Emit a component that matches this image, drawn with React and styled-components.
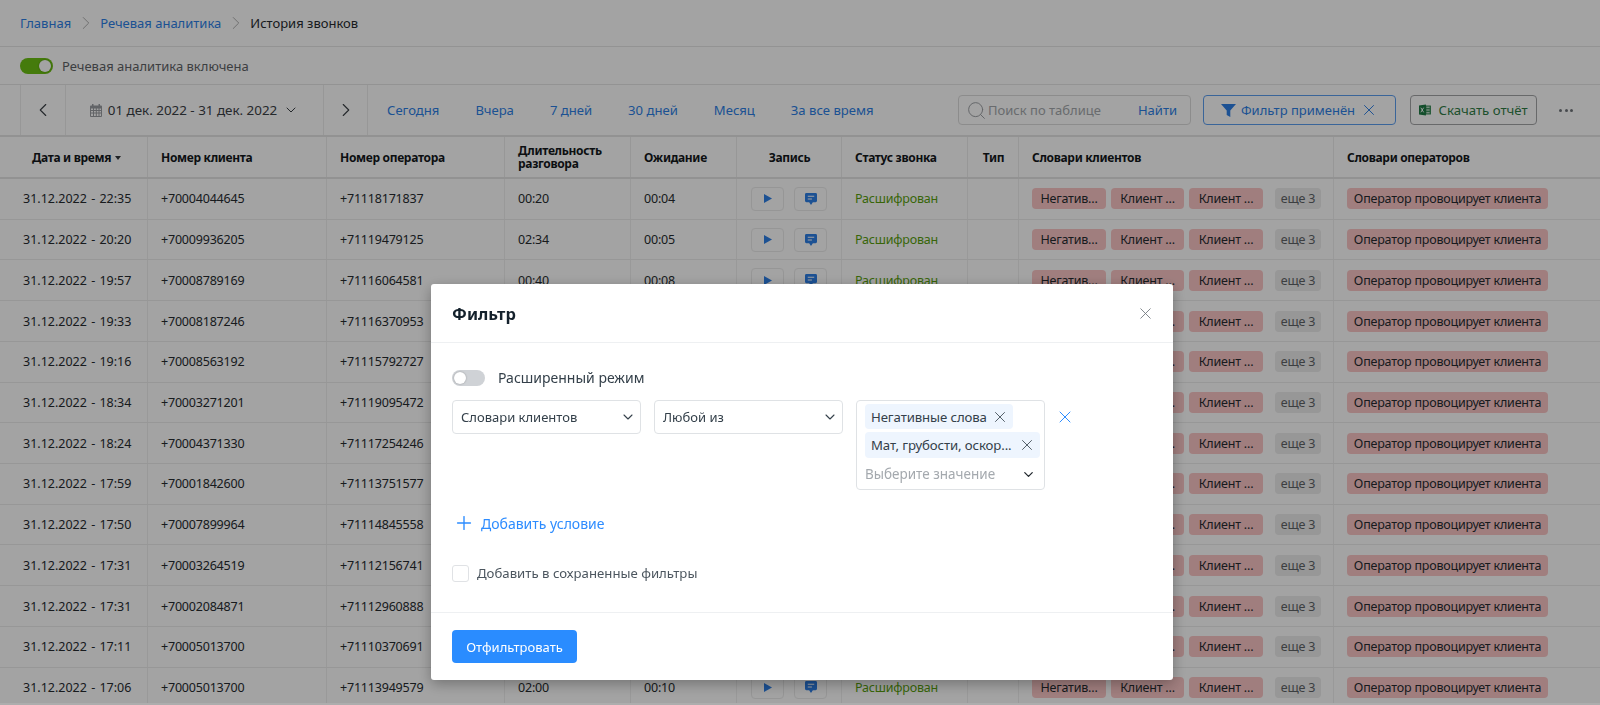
import React from 'react';
import styled, { createGlobalStyle } from 'styled-components';
import { ChevronLeft, ChevronRight, ChevronDown, Search, X, Plus } from 'lucide-react';

const GlobalStyle = createGlobalStyle`
  html, body { margin: 0; padding: 0; height: 705px; overflow: hidden; background: #fff; }
  body { font-family: "Noto Sans", "Liberation Sans", sans-serif; font-size: 13px; color: #262b30; }
  * { box-sizing: border-box; }
`;

const COLUMNS = '148px 179px 178px 126px 106px 105px 126px 51px 315px 1fr';

const Page = styled.div`
  height: 705px;
  overflow: hidden;
  display: flex;
  flex-direction: column;
`;

const Breadcrumbs = styled.nav`
  height: 47px;
  padding: 0 20px 1px;
  display: flex;
  align-items: center;
  gap: 3.5px;
  border-bottom: 1px solid #e6e6e6;
  font-size: 13px;
  color: #a8a8a8;
`;

const Crumb = styled.a`
  color: ${(p) => (p.$current ? '#262b30' : '#2d7fe6')};
`;

const AnalyticsRow = styled.div`
  height: 38px;
  padding: 0 20px;
  display: flex;
  align-items: center;
  gap: 9px;
  border-bottom: 1px solid #e6e6e6;
  color: #5f6367;
  font-size: 13px;
`;

const Toggle = styled.span`
  position: relative;
  flex: none;
  width: 33px;
  height: 16px;
  border-radius: 8px;
  background: ${(p) => (p.$on ? '#6cc013' : '#cfd2d6')};
  &::after {
    content: '';
    position: absolute;
    top: 2px;
    left: ${(p) => (p.$on ? '19px' : '2px')};
    width: 12px;
    height: 12px;
    border-radius: 50%;
    background: #fff;
    box-shadow: 0 0 2px rgba(0, 0, 0, 0.3);
  }
`;

const Toolbar = styled.div`
  height: 52px;
  padding: 0 27px 0 20px;
  display: flex;
  align-items: center;
  border-bottom: 2px solid #e4e4e4;
`;

const NavCell = styled.div`
  flex: none;
  height: 100%;
  width: ${(p) => p.$w}px;
  display: flex;
  align-items: center;
  justify-content: center;
  gap: 6px;
  border-left: 1px solid #ececec;
  border-right: ${(p) => (p.$last ? '1px solid #ececec' : 'none')};
  color: #3b4046;
  font-size: 13.4px;
  white-space: nowrap;
`;

const Presets = styled.div`
  margin-left: 19px;
  display: flex;
  gap: 36px;
  color: #2d7fe6;
  font-size: 13.1px;
  white-space: nowrap;
`;

const SearchBox = styled.div`
  margin-left: auto;
  flex: none;
  width: 233px;
  height: 30px;
  padding: 0 13px 0 7px;
  display: flex;
  align-items: center;
  gap: 1px;
  border: 1px solid #dcdcdc;
  border-radius: 4px;
  color: #a4a8ac;
  font-size: 13px;
  span:last-child { margin-left: auto; color: #2d7fe6; }
`;

const FilterButton = styled.div`
  flex: none;
  margin-left: 12px;
  width: 193px;
  height: 30px;
  display: flex;
  align-items: center;
  justify-content: center;
  gap: 5px;
  border: 1px solid #5c9ff0;
  border-radius: 4px;
  color: #2d7fe6;
  font-size: 13px;
`;

const DownloadButton = styled.div`
  flex: none;
  margin-left: 14px;
  width: 127px;
  height: 30px;
  display: flex;
  align-items: center;
  justify-content: center;
  gap: 7px;
  border: 1px solid #a3a5a7;
  border-radius: 4px;
  color: #2f7d46;
  font-size: 13.2px;
`;

const Dots = styled.div`
  flex: none;
  margin-left: 22px;
  width: 14px;
  display: flex;
  justify-content: space-between;
  i { width: 3px; height: 3px; border-radius: 50%; background: #70757a; }
`;

const Table = styled.div`
  height: 566px;
  overflow: hidden;
`;

const HeadRow = styled.div`
  display: grid;
  grid-template-columns: ${COLUMNS};
  height: 42px;
  border-bottom: 2px solid #e4e4e4;
`;

const HeadCell = styled.div`
  padding: 0 0 0 ${(p) => p.$pad || 13}px;
  display: flex;
  align-items: center;
  justify-content: ${(p) => (p.$center ? 'center' : 'flex-start')};
  border-right: ${(p) => (p.$last ? 'none' : '1px solid #ececec')};
  font-size: 12px;
  font-weight: 700;
  letter-spacing: -0.32px;
  line-height: 13px;
  color: #14181c;
`;

const SortMark = styled.span`
  margin: 2px 0 0 4px;
  border: 3px solid transparent;
  border-top: 4px solid #33373b;
  border-bottom: none;
`;

const Row = styled.div`
  display: grid;
  grid-template-columns: ${COLUMNS};
  height: 40.73px;
  border-bottom: 1px solid #ececec;
`;

const Cell = styled.div`
  padding: 0 0 0 ${(p) => p.$pad ?? 13}px;
  display: flex;
  align-items: center;
  justify-content: ${(p) => (p.$center ? 'center' : 'flex-start')};
  gap: ${(p) => p.$gap || 0}px;
  border-right: ${(p) => (p.$last ? 'none' : '1px solid #f0f0f0')};
  font-size: 12.5px;
  letter-spacing: -0.2px;
  color: #262b30;
  white-space: nowrap;
`;

const DateCell = styled(Cell)`
  letter-spacing: 0;
  word-spacing: 1px;
`;

const IconButton = styled.div`
  width: 33px;
  height: 24px;
  display: flex;
  align-items: center;
  justify-content: center;
  border: 1px solid #ebebeb;
  border-radius: 4px;
`;

const Status = styled.span`
  color: #589f0e;
`;

const Tag = styled.span`
  width: ${(p) => p.$w}px;
  flex: none;
  height: 21px;
  display: flex;
  align-items: center;
  justify-content: center;
  border-radius: 4px;
  background: ${(p) => (p.$more ? '#ececec' : '#fbc6c6')};
  margin-left: ${(p) => (p.$more ? '7px' : 0)};
  color: ${(p) => (p.$more ? '#5f6367' : '#262b30')};
  white-space: nowrap;
`;

const Overlay = styled.div`
  position: fixed;
  inset: 0;
  background: rgba(0, 0, 0, 0.36);
  &::after {
    content: '';
    position: absolute;
    left: 0;
    right: 0;
    bottom: 0;
    height: 2px;
    background: rgba(255, 255, 255, 0.1);
  }
`;

const Modal = styled.div`
  width: 742px;
  height: 396px;
  margin: 284px 0 0 431px;
  background: #fff;
  border-radius: 3px;
  box-shadow: 0 4px 14px rgba(0, 0, 0, 0.3);
  display: flex;
  flex-direction: column;
`;

const ModalHead = styled.div`
  height: 59px;
  padding: 0 18px 0 21px;
  display: flex;
  align-items: center;
  justify-content: space-between;
  border-bottom: 1px solid #eef0f2;
  h2 { margin: 0; font-size: 16.5px; font-weight: 700; color: #14212c; }
`;

const ModalBody = styled.div`
  flex: 1;
  padding: 25px 21px 0;
`;

const ModeRow = styled.div`
  display: flex;
  align-items: center;
  gap: 13px;
  font-size: 14px;
  color: #34404a;
`;

const ConditionRow = styled.div`
  margin-top: 13px;
  display: flex;
  align-items: flex-start;
  gap: 13px;
`;

const Select = styled.div`
  width: 189px;
  height: 34px;
  padding: 0 4px 0 8px;
  display: flex;
  align-items: center;
  justify-content: space-between;
  border: 1px solid #dfe2e5;
  border-radius: 4px;
  font-size: 13px;
  color: #34404a;
`;

const MultiSelect = styled.div`
  width: 189px;
  height: 90px;
  padding: 3px 5px 0 8px;
  border: 1px solid #dfe2e5;
  border-radius: 4px;
  display: flex;
  flex-direction: column;
  align-items: flex-start;
  gap: 3px;
`;

const ValueChip = styled.div`
  height: ${(p) => p.$h || 25}px;
  width: ${(p) => p.$w}px;
  padding: 0 4px 0 6px;
  display: flex;
  align-items: center;
  justify-content: space-between;
  border-radius: 4px;
  background: #eef5fe;
  font-size: 13.2px;
  letter-spacing: -0.1px;
  color: #34404a;
  white-space: nowrap;
`;

const Placeholder = styled.div`
  margin-top: 4px;
  width: 100%;
  padding-right: 3px;
  display: flex;
  align-items: center;
  justify-content: space-between;
  font-size: 13.5px;
  color: #a4a9ae;
  svg { color: #22282e; }
`;

const ClearButton = styled.div`
  margin: 7px 0 0 -3px;
  color: #2d8cff;
  line-height: 0;
`;

const AddCondition = styled.div`
  margin: 22px 0 0 1px;
  display: flex;
  align-items: center;
  gap: 6px;
  color: #2d8cff;
  font-size: 14px;
`;

const SaveRow = styled.div`
  margin-top: 30px;
  display: flex;
  align-items: center;
  gap: 8px;
  font-size: 13.2px;
  color: #4c565f;
`;

const Checkbox = styled.span`
  width: 17px;
  height: 17px;
  border: 1px solid #e0e2e5;
  border-radius: 3px;
`;

const ModalFoot = styled.div`
  height: 68px;
  padding: 17px 21px 0;
  border-top: 1px solid #eef0f2;
`;

const PrimaryButton = styled.div`
  width: 125px;
  height: 33px;
  display: flex;
  align-items: center;
  justify-content: center;
  border-radius: 4px;
  background: #2a8cff;
  color: #fff;
  font-size: 13px;
`;

const CalendarIcon = () => (
  <svg width="12" height="13" viewBox="0 0 12 13" fill="#9a9da1">
    <path d="M2 0h1.500v1.500h5V0H10v1.500h1a1 1 0 0 1 1 1V12a1 1 0 0 1-1 1H1a1 1 0 0 1-1-1V2.500a1 1 0 0 1 1-1h1zM1 4.500V6h2V4.500zm3 0V6h1.800V4.500zm2.800 0V6H8.500V4.500zm2.700 0V6H11V4.500zM1 7v1.500h2V7zm3 0v1.500h1.800V7zm2.800 0v1.500H8.500V7zm2.700 0v1.500H11V7zM1 9.500V12h2V9.500zm3 0V12h1.800V9.500zm2.800 0V12H8.500V9.500zm2.700 0V12H11V9.500z" />
  </svg>
);

const FunnelIcon = () => (
  <svg width="15" height="13" viewBox="0 0 15 13" fill="#2d7fe6">
    <path d="M0 0h15L9.300 6.600V13L5.700 11V6.600z" />
  </svg>
);

const ExcelIcon = () => (
  <svg width="12" height="12" viewBox="0 0 13 12">
    <path d="M6 1h6.500a.5.500 0 0 1 .5.500v9a.5.500 0 0 1-.5.500H6z" fill="#3f8f5d" />
    <path d="M8 3h3.500M8 6h3.500M8 9h3.500" stroke="#fff" strokeWidth="1" />
    <path d="M0 1.200 7.500 0v12L0 10.800z" fill="#1e7a44" />
    <path d="m2 3.500 3 5M5 3.500l-3 5" stroke="#fff" strokeWidth="1" />
  </svg>
);

const PlayIcon = () => (
  <svg width="8" height="9" viewBox="0 0 9 10" fill="#2d7fe6">
    <path d="M0 0l9 5-9 5z" />
  </svg>
);

const CommentIcon = () => (
  <svg width="12" height="12" viewBox="0 0 13 13">
    <path d="M1.500 0h10A1.500 1.500 0 0 1 13 1.500v7a1.500 1.500 0 0 1-1.500 1.500H8.500L6.500 13l-2-3h-3A1.500 1.500 0 0 1 0 8.500v-7A1.500 1.500 0 0 1 1.500 0z" fill="#2d7fe6" />
    <path d="M3 3.500h7M3 6.500h4.500" stroke="#fff" strokeWidth="1.200" />
  </svg>
);

const rows = [
  ['31.12.2022 - 22:35', '+70004044645', '+71118171837', '00:20', '00:04'],
  ['31.12.2022 - 20:20', '+70009936205', '+71119479125', '02:34', '00:05'],
  ['31.12.2022 - 19:57', '+70008789169', '+71116064581', '00:40', '00:08'],
  ['31.12.2022 - 19:33', '+70008187246', '+71116370953', '01:12', '00:06'],
  ['31.12.2022 - 19:16', '+70008563192', '+71115792727', '00:52', '00:04'],
  ['31.12.2022 - 18:34', '+70003271201', '+71119095472', '01:45', '00:07'],
  ['31.12.2022 - 18:24', '+70004371330', '+71117254246', '00:33', '00:05'],
  ['31.12.2022 - 17:59', '+70001842600', '+71113751577', '02:10', '00:09'],
  ['31.12.2022 - 17:50', '+70007899964', '+71114845558', '01:03', '00:04'],
  ['31.12.2022 - 17:31', '+70003264519', '+71112156741', '00:47', '00:06'],
  ['31.12.2022 - 17:31', '+70002084871', '+71112960888', '01:28', '00:08'],
  ['31.12.2022 - 17:11', '+70005013700', '+71110370691', '00:15', '00:05'],
  ['31.12.2022 - 17:06', '+70005013700', '+71113949579', '02:00', '00:10'],
];

const presets = ['Сегодня', 'Вчера', '7 дней', '30 дней', 'Месяц', 'За все время'];

export default function App() {
  return (
    <>
      <GlobalStyle />
      <Page>
        <Breadcrumbs>
          <Crumb>Главная</Crumb>
          <ChevronRight size={22} strokeWidth={1} />
          <Crumb>Речевая аналитика</Crumb>
          <ChevronRight size={22} strokeWidth={1} />
          <Crumb $current>История звонков</Crumb>
        </Breadcrumbs>
        <AnalyticsRow>
          <Toggle $on />
          Речевая аналитика включена
        </AnalyticsRow>
        <Toolbar>
          <NavCell $w={45}><ChevronLeft size={22} strokeWidth={1.2} /></NavCell>
          <NavCell $w={258}>
            <CalendarIcon />
            01 дек. 2022 - 31 дек. 2022
            <ChevronDown size={16} strokeWidth={1.5} />
          </NavCell>
          <NavCell $w={45} $last><ChevronRight size={22} strokeWidth={1.2} /></NavCell>
          <Presets>
            {presets.map((p) => <span key={p}>{p}</span>)}
          </Presets>
          <SearchBox>
            <Search size={21} strokeWidth={1.1} color="#9a9da1" />
            <span>Поиск по таблице</span>
            <span>Найти</span>
          </SearchBox>
          <FilterButton>
            <FunnelIcon />
            Фильтр применён
            <X size={18} strokeWidth={1.3} />
          </FilterButton>
          <DownloadButton>
            <ExcelIcon />
            Скачать отчёт
          </DownloadButton>
          <Dots><i /><i /><i /></Dots>
        </Toolbar>
        <Table>
          <HeadRow>
            <HeadCell $pad={32}>Дата и время<SortMark /></HeadCell>
            <HeadCell>Номер клиента</HeadCell>
            <HeadCell>Номер оператора</HeadCell>
            <HeadCell>Длительность разговора</HeadCell>
            <HeadCell>Ожидание</HeadCell>
            <HeadCell $center $pad={1}>Запись</HeadCell>
            <HeadCell>Статус звонка</HeadCell>
            <HeadCell $center $pad={1}>Тип</HeadCell>
            <HeadCell>Словари клиентов</HeadCell>
            <HeadCell $last>Словари операторов</HeadCell>
          </HeadRow>
          {rows.map((r, i) => (
            <Row key={i}>
              <DateCell $pad={23}>{r[0]}</DateCell>
              <Cell>{r[1]}</Cell>
              <Cell>{r[2]}</Cell>
              <Cell>{r[3]}</Cell>
              <Cell>{r[4]}</Cell>
              <Cell $center $pad={0} $gap={10}>
                <IconButton><PlayIcon /></IconButton>
                <IconButton><CommentIcon /></IconButton>
              </Cell>
              <Cell><Status>Расшифрован</Status></Cell>
              <Cell />
              <Cell $gap={5}>
                <Tag $w={74}>Негатив...</Tag>
                <Tag $w={73}>Клиент ...</Tag>
                <Tag $w={74}>Клиент ...</Tag>
                <Tag $w={46} $more>еще 3</Tag>
              </Cell>
              <Cell $last><Tag $w={201}>Оператор провоцирует клиента</Tag></Cell>
            </Row>
          ))}
        </Table>
      </Page>
      <Overlay>
        <Modal>
          <ModalHead>
            <h2>Фильтр</h2>
            <X size={19} strokeWidth={1.1} color="#70777d" />
          </ModalHead>
          <ModalBody>
            <ModeRow>
              <Toggle />
              Расширенный режим
            </ModeRow>
            <ConditionRow>
              <Select>
                Словари клиентов
                <ChevronDown size={16} strokeWidth={1.6} />
              </Select>
              <Select>
                Любой из
                <ChevronDown size={16} strokeWidth={1.6} />
              </Select>
              <MultiSelect>
                <ValueChip $w={148}>
                  Негативные слова
                  <X size={18} strokeWidth={1.1} />
                </ValueChip>
                <ValueChip $w={175} $h={26}>
                  Мат, грубости, оскор...
                  <X size={18} strokeWidth={1.1} />
                </ValueChip>
                <Placeholder>
                  Выберите значение
                  <ChevronDown size={15} strokeWidth={2} />
                </Placeholder>
              </MultiSelect>
              <ClearButton><X size={20} strokeWidth={1.2} /></ClearButton>
            </ConditionRow>
            <AddCondition>
              <Plus size={22} strokeWidth={1.5} />
              Добавить условие
            </AddCondition>
            <SaveRow>
              <Checkbox />
              Добавить в сохраненные фильтры
            </SaveRow>
          </ModalBody>
          <ModalFoot>
            <PrimaryButton>Отфильтровать</PrimaryButton>
          </ModalFoot>
        </Modal>
      </Overlay>
    </>
  );
}
